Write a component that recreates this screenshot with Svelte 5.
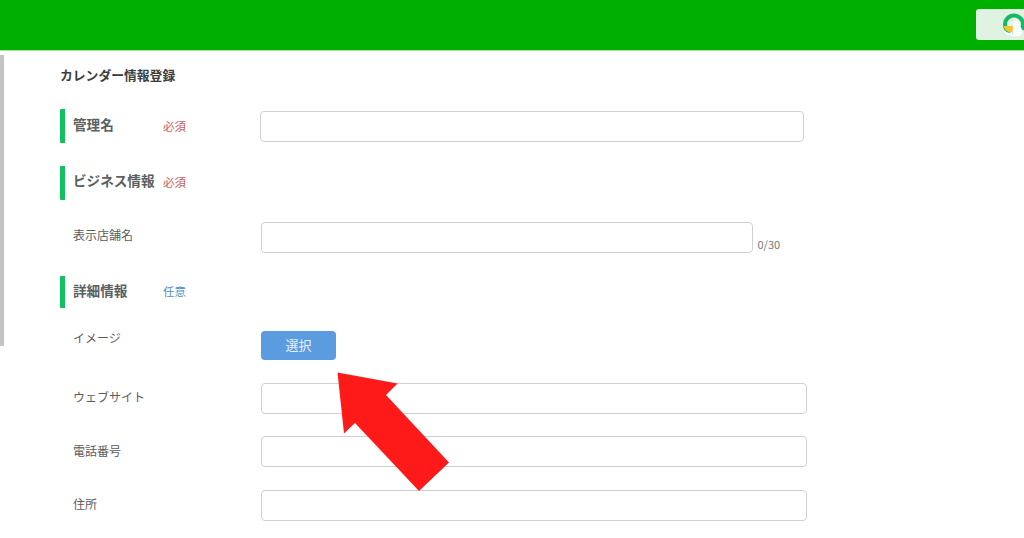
<script>
	const required = { text: '必須', cls: 'req' };
	const optional = { text: '任意', cls: 'opt' };
</script>

<header class="topbar">
	<div class="account">
		<svg class="logo" width="22" height="23" viewBox="0 0 22 23">
			<circle cx="11" cy="11.5" r="11" fill="#14b866" />
			<circle cx="11" cy="11.5" r="7" fill="#e3f3e4" />
			<path d="M0.5 13 H10 L11 19 Q5 20 2.5 17 Z" fill="#f4c430" />
			<path d="M1 17 Q4 21 9 19 L10 23 L4 22 Z" fill="#fff" />
			<path d="M9 23 L10.5 10 Q12 6.5 15 8 Q18 9.5 17 13 L20 18 L17 23 Z" fill="#fff" />
		</svg>
	</div>
</header>

<div class="page">
	<div class="scroll"></div>
	<main class="content">
		<h1>カレンダー情報登録</h1>

		<section class="head first">
			<div class="label">
				<h2>管理名</h2>
				<span class={required.cls}>{required.text}</span>
			</div>
			<input class="field narrow" type="text" />
		</section>

		<section class="head second">
			<div class="label">
				<h2>ビジネス情報</h2>
				<span class={required.cls}>{required.text}</span>
			</div>
		</section>

		<div class="row shop">
			<span class="name">表示店舗名</span>
			<input class="field shopfield" type="text" />
			<span class="count">0/30</span>
		</div>

		<section class="head third">
			<div class="label">
				<h2>詳細情報</h2>
				<span class={optional.cls}>{optional.text}</span>
			</div>
		</section>

		<div class="row image">
			<span class="name">イメージ</span>
			<button class="pick">選択</button>
		</div>

		<div class="row web">
			<span class="name">ウェブサイト</span>
			<input class="field wide" type="text" />
		</div>
		<div class="row tel">
			<span class="name">電話番号</span>
			<input class="field wide" type="text" />
		</div>
		<div class="row addr">
			<span class="name">住所</span>
			<input class="field wide" type="text" />
		</div>
	</main>

	<!-- annotation arrow drawn over the form -->
	<svg class="arrow" width="1024" height="538" viewBox="0 0 1024 538">
		<polygon points="337.5,372.5 397.5,383.5 386,395 449,462.5 419,491 355,423 344,433.5" fill="#ff1a1a" />
	</svg>
</div>

<style>
	:global(body) {
		background: #fff;
		font-family: "Noto Sans CJK JP", "Noto Sans", sans-serif;
		overflow: hidden;
	}

	.topbar {
		height: 50px;
		background: #00b000;
		border-bottom: 1px solid #a6e3a6;
		display: flex;
		justify-content: flex-end;
		align-items: flex-start;
		overflow: hidden;
	}

	.account {
		width: 48px;
		height: 31px;
		margin-top: 9px;
		background: #e0f3e2;
		border-radius: 3px 0 0 3px;
		padding: 4px 0 0 27px;
		box-sizing: border-box;
		overflow: hidden;
	}

	.logo {
		display: block;
	}

	.page {
		height: 487px;
		overflow: hidden;
		display: flex;
	}

	.scroll {
		width: 4px;
		height: 291px;
		margin-top: 4px;
		background: #c4c4c4;
		flex: none;
	}

	.content {
		padding: 15px 0 0 56px;
		flex: 1;
	}

	h1 {
		margin: 0 0 25px;
		font-size: 12.8px;
		line-height: 18px;
		font-weight: 700;
		color: #3c3c3c;
	}

	.head {
		display: flex;
		align-items: center;
	}

	.label {
		width: 200px;
		height: 34px;
		box-sizing: border-box;
		border-left: 5px solid #0fc15f;
		border-radius: 1px;
		padding-left: 8px;
		display: flex;
		align-items: center;
		flex: none;
	}

	.first {
		height: 34px;
	}

	.first h2,
	.third h2 {
		width: 90px;
	}

	.second {
		margin-top: 23px;
	}

	.third {
		margin-top: 23px;
	}

	.third .label {
		height: 32px;
	}

	h2 {
		margin: -5px 0 0;
		font-size: 13.6px;
		font-weight: 700;
		color: #5a5f62;
		flex: none;
	}

	.first h2 {
		margin-top: -4px;
	}

	.second h2 {
		width: 90px;
		white-space: nowrap;
		margin-top: -6px;
	}

	.req,
	.opt {
		font-size: 11.5px;
		margin-top: -2px;
	}

	.first .req {
		margin-top: -1px;
	}

	.req {
		color: #c0605f;
	}

	.opt {
		color: #4f8fc4;
	}

	.row {
		display: flex;
		align-items: center;
		padding-left: 13px;
	}

	.name {
		width: 188px;
		flex: none;
		font-size: 12px;
		color: #5c5c5c;
	}

	.field {
		height: 31px;
		box-sizing: border-box;
		border: 1px solid #d0d0d0;
		border-radius: 4px;
		background: #fff;
		padding: 0;
		margin: 0;
		display: block;
	}

	.narrow {
		width: 544px;
	}

	.shop {
		margin-top: 22px;
	}

	.shop .name {
		margin-top: -6px;
	}

	.shopfield {
		width: 491.5px;
	}

	.count {
		font-size: 11px;
		color: #777;
		align-self: flex-end;
		margin: 0 0 0 5px;
		line-height: 14px;
		position: relative;
		top: -2px;
	}

	.wide {
		width: 546px;
	}

	.image {
		margin-top: 23px;
		height: 29px;
		align-items: flex-start;
	}

	.image .name {
		line-height: 14px;
	}

	.pick {
		width: 75px;
		height: 29px;
		background: #5b9bdf;
		border: none;
		border-radius: 4px;
		color: #e9f2fb;
		font-family: inherit;
		font-size: 13px;
		padding: 0 0 3px;
	}

	.web {
		margin-top: 23px;
	}

	.tel {
		margin-top: 22px;
	}

	.addr {
		margin-top: 23px;
	}

	.web .name,
	.addr .name {
		margin-top: -4px;
	}

	.tel .name {
		margin-top: -3px;
	}

	.arrow {
		position: absolute;
		left: 0;
		top: 0;
		pointer-events: none;
	}
</style>
